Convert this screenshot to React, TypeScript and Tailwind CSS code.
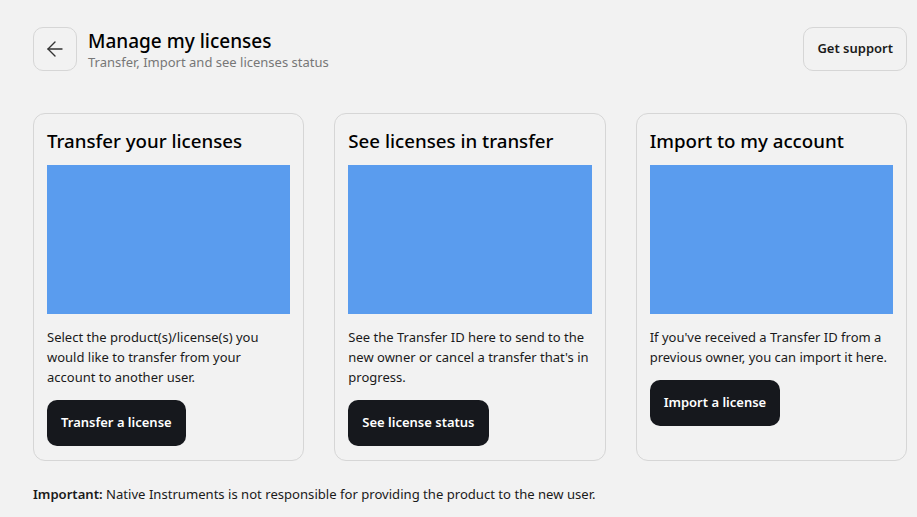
import { ArrowLeft } from 'lucide-react';

const cards = [
  {
    title: 'Transfer your licenses',
    text: 'Select the product(s)/license(s) you would like to transfer from your account to another user.',
    action: 'Transfer a license',
  },
  {
    title: 'See licenses in transfer',
    text: "See the Transfer ID here to send to the new owner or cancel a transfer that's in progress.",
    action: 'See license status',
  },
  {
    title: 'Import to my account',
    text: "If you've received a Transfer ID from a previous owner, you can import it here.",
    action: 'Import a license',
  },
];

export default function App() {
  return (
    <div className="min-h-screen bg-[#f2f2f2] text-[#111] font-['Noto_Sans',sans-serif]">
      <div className="pl-[33px] pr-[10px] pt-[27px]">
        {/* Header */}
        <div className="flex items-start justify-between">
          <div className="flex items-start gap-[11px]">
            <button className="w-[44px] h-[44px] rounded-[10px] border border-[#d6d6d6] flex items-center justify-center text-[#333]">
              <ArrowLeft size={24} strokeWidth={1.4} />
            </button>
            <div className="pt-[1px]">
              <h1 className="text-[19px] leading-[26px] font-medium text-black">Manage my licenses</h1>
              <p className="text-[13px] leading-[16px] text-[#777]">Transfer, Import and see licenses status</p>
            </div>
          </div>
          <button className="h-[44px] px-[13px] rounded-[10px] border border-[#d6d6d6] text-[13px] font-semibold text-[#1a1a1a]">
            Get support
          </button>
        </div>

        {/* Cards */}
        <div className="mt-[42px] grid grid-cols-3 gap-[30px]">
          {cards.map((card) => (
            <div key={card.title} className="rounded-[12px] border border-[#d6d6d6] px-[13px] pt-[13px] pb-[14px] flex flex-col">
              <h2 className="text-[18.7px] leading-[28px] font-medium text-black">{card.title}</h2>
              <div className="mt-[10px] h-[149px] bg-[#5a9cee]" />
              <p className="mt-[13px] text-[13px] leading-[20px] text-[#1a1a1a]">{card.text}</p>
              <div className="mt-[13px]">
                <button className="h-[46px] px-[14px] rounded-[10px] bg-[#16181d] text-white text-[13px] font-semibold">
                  {card.action}
                </button>
              </div>
            </div>
          ))}
        </div>

        <p className="mt-[23px] text-[13.1px] leading-[20px] text-[#1a1a1a]">
          <span className="font-semibold">Important:</span> Native Instruments is not responsible for providing the product to the new user.
        </p>
      </div>
    </div>
  );
}
